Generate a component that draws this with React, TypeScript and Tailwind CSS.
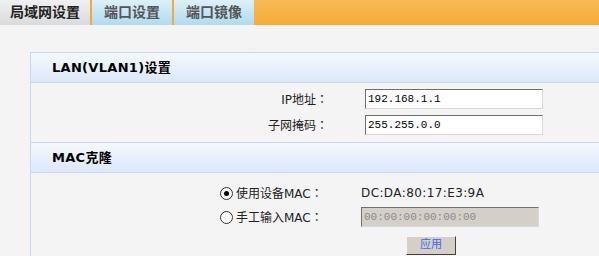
import { useState } from "react";

const tabs = ["局域网设置", "端口设置", "端口镜像"];

function Tabs() {
  return (
    <div className="flex h-[25px] bg-gradient-to-b from-[#f8b954] to-[#f6ab35]">
      {tabs.map((t, i) => (
        <div
          key={t}
          className={
            i === 0
              ? "flex w-[90px] items-center justify-center bg-gradient-to-b from-[#eef0f1] to-[#d9dbdc] text-[14px] font-bold text-[#222]"
              : "flex w-[82px] items-center justify-center border-l-[2px] border-[#f5a93a] bg-gradient-to-b from-[#dcf0f9] to-[#b0dbef] text-[14px] font-bold text-[#555]"
          }
        >
          {t}
        </div>
      ))}
    </div>
  );
}

function SectionHeader({ title }: { title: string }) {
  return (
    <div className="flex h-[30px] items-center border-b border-[#c4d9f1] bg-gradient-to-b from-[#f6f9fe] to-[#dbe7f9] pl-[21px] text-[13px] font-bold tracking-[0.3px] text-black">
      {title}
    </div>
  );
}

// full-width colon, centred in its box like the original
function Label({ text }: { text: string }) {
  return (
    <span>
      {text}
      <span className="font-['Noto_Sans_CJK_TC',sans-serif]">：</span>
    </span>
  );
}

function TextInput({ value, disabled }: { value: string; disabled?: boolean }) {
  return (
    <input
      readOnly
      disabled={disabled}
      value={value}
      className={
        "h-[20px] w-[178px] border border-t-[#707070] border-l-[#707070] border-r-[#d8d8d8] border-b-[#d8d8d8] px-[2px] font-['Liberation_Mono',monospace] text-[11px] outline-none " +
        (disabled ? "bg-[#d4d0c8] text-[#8a8a8a]" : "bg-white text-black")
      }
    />
  );
}

function Radio({ checked, onClick }: { checked: boolean; onClick: () => void }) {
  return (
    <span
      onClick={onClick}
      className="flex h-[13px] w-[13px] items-center justify-center rounded-full border border-[#333] bg-white"
    >
      {checked && <span className="h-[5px] w-[5px] rounded-full bg-black" />}
    </span>
  );
}

export default function App() {
  const [mode, setMode] = useState(0);
  return (
    <div className="h-[256px] w-[599px] overflow-hidden bg-[#f4f4f4] font-['DejaVu_Sans','Noto_Sans_CJK_SC',sans-serif]">
      <Tabs />
      <div className="ml-[30px] mt-[27px] border-l border-t border-b border-[#c4d9f1]">
        <SectionHeader title="LAN(VLAN1)设置" />
        <div className="flex flex-col gap-[6px] pb-[7px] pt-[6px] text-[12px] text-[#222]">
          <div className="flex items-center">
            <span className="w-[297px] text-right">
              <Label text="IP地址" />
            </span>
            <span className="ml-[37px]">
              <TextInput value="192.168.1.1" />
            </span>
          </div>
          <div className="flex items-center">
            <span className="w-[297px] text-right">
              <Label text="子网掩码" />
            </span>
            <span className="ml-[37px]">
              <TextInput value="255.255.0.0" />
            </span>
          </div>
        </div>
        <div className="border-t border-[#c4d9f1]">
          <SectionHeader title="MAC克隆" />
        </div>
        <div className="flex flex-col pb-[3px] pt-[10px] text-[12px] text-[#222]">
          <div className="flex h-[20px] items-center">
            <div className="ml-[189px] flex w-[141px] items-center gap-[3px]">
              <Radio checked={mode === 0} onClick={() => setMode(0)} />
              <Label text="使用设备MAC" />
            </div>
            <span className="text-[12px] tracking-[0.4px]">DC:DA:80:17:E3:9A</span>
          </div>
          <div className="mt-[4px] flex h-[20px] items-center">
            <div className="ml-[189px] flex w-[141px] items-center gap-[3px]">
              <Radio checked={mode === 1} onClick={() => setMode(1)} />
              <Label text="手工输入MAC" />
            </div>
            <TextInput value="00:00:00:00:00:00" disabled={mode === 0} />
          </div>
          <div className="mt-[9px] flex">
            <button className="ml-[375px] h-[19px] w-[50px] border border-t-[#f4f4f4] border-l-[#f4f4f4] border-r-[#404040] border-b-[#404040] bg-[#d4d0c8] text-[11px] text-[#3b66f0]">
              应用
            </button>
          </div>
        </div>
      </div>
    </div>
  );
}
